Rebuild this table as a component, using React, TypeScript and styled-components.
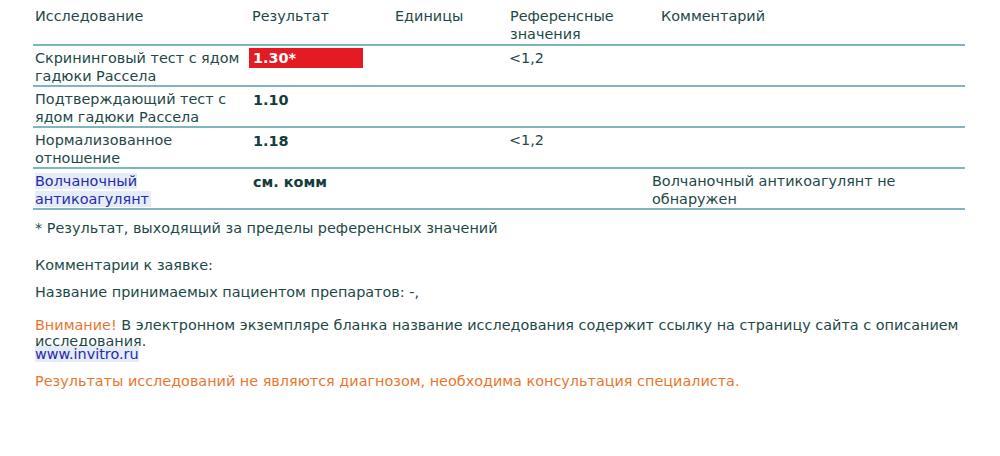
import styled, { createGlobalStyle } from "styled-components";

const GlobalStyle = createGlobalStyle`
  html, body {
    margin: 0;
    padding: 0;
    background: #ffffff;
  }
  body {
    font-family: "DejaVu Sans", Verdana, sans-serif;
    font-size: 14.4px;
    color: #1e4848;
  }
`;

const StPage = styled.div`
  width: 1000px;
  height: 456px;
  padding: 7px 0 0 33px;
  box-sizing: border-box;
  overflow: hidden;
`;

const StTable = styled.div`
  width: 932px;
  display: grid;
  grid-template-columns: 216px 144px 115px 142px 1fr;
`;

const StHeadCell = styled.div<{ $indent?: number }>`
  padding: 0 0 0 ${({ $indent }) => $indent ?? 2}px;
  height: 37px;
  line-height: 18px;
  border-bottom: 2px solid #7db6bc;
`;

const StCell = styled.div<{ $indent?: number }>`
  padding: 3px 2px 0 ${({ $indent }) => $indent ?? 2}px;
  height: 36px;
  line-height: 18px;
  border-bottom: 2px solid #7db6bc;
`;

const StValue = styled.span<{ $flag?: boolean }>`
  display: inline-block;
  font-weight: bold;
  color: ${({ $flag }) => ($flag ? "#ffffff" : "#143c3c")};
  background: ${({ $flag }) => ($flag ? "#e41b23" : "transparent")};
  width: ${({ $flag }) => ($flag ? "106px" : "auto")};
  padding: ${({ $flag }) => ($flag ? "1px 4px" : "1px 0 0 2px")};
  margin: ${({ $flag }) => ($flag ? "-1px 0 0 -2px" : "0")};
  line-height: 18px;
`;

const StLinkName = styled.span`
  color: #2a2aa8;
  background: #e4ecf8;
  padding-right: 2px;
`;

const StNotes = styled.div`
  padding-left: 2px;
  width: 945px;
`;

const StNote = styled.div<{ $top: number }>`
  margin: ${({ $top }) => $top}px 0 0;
  line-height: 16px;
`;

const StSiteLine = styled.div`
  margin-top: -3px;
  line-height: 16px;
`;

const StOrange = styled.span`
  color: #e8762e;
`;

const StSite = styled.span`
  color: #2a2aa8;
  background: #e4ecf8;
`;

type Row = {
  name: string;
  value: string;
  flag?: boolean;
  ref?: string;
  comment?: string;
  link?: boolean;
};

const rows: Row[] = [
  { name: "Скрининговый тест с ядом гадюки Рассела", value: "1.30*", flag: true, ref: "<1,2" },
  { name: "Подтверждающий тест с ядом гадюки Рассела", value: "1.10" },
  { name: "Нормализованное отношение", value: "1.18", ref: "<1,2" },
  {
    name: "Волчаночный антикоагулянт",
    value: "см. комм",
    link: true,
    comment: "Волчаночный антикоагулянт не обнаружен",
  },
];

const App = () => {
  return (
    <>
      <GlobalStyle />
      <StPage>
        <StTable>
          <StHeadCell>Исследование</StHeadCell>
          <StHeadCell $indent={3}>Результат</StHeadCell>
          <StHeadCell>Единицы</StHeadCell>
          <StHeadCell>
            Референсные
            <br />
            значения
          </StHeadCell>
          <StHeadCell $indent={11}>Комментарий</StHeadCell>
          {rows.map((row, index) => [
            <StCell key={`n${index}`}>
              {row.link ? (
                <StLinkName>
                  Волчаночный
                  <br />
                  антикоагулянт
                </StLinkName>
              ) : (
                row.name
              )}
            </StCell>,
            <StCell key={`v${index}`} $indent={2}>
              <StValue $flag={row.flag}>{row.value}</StValue>
            </StCell>,
            <StCell key={`u${index}`} />,
            <StCell key={`r${index}`} $indent={1}>
              {row.ref}
            </StCell>,
            <StCell key={`c${index}`}>{row.comment}</StCell>,
          ])}
        </StTable>
        <StNotes>
          <StNote $top={10}>* Результат, выходящий за пределы референсных значений</StNote>
          <StNote $top={21}>Комментарии к заявке:</StNote>
          <StNote $top={11}>Название принимаемых пациентом препаратов: -,</StNote>
          <StNote $top={17}>
            <StOrange>Внимание!</StOrange> В электронном экземпляре бланка название
            исследования содержит ссылку на страницу сайта с описанием
            <br />
            исследования.
          </StNote>
          <StSiteLine>
            <StSite>www.invitro.ru</StSite>
          </StSiteLine>
          <StNote $top={11}>
            <StOrange>
              Результаты исследований не являются диагнозом, необходима консультация
              специалиста.
            </StOrange>
          </StNote>
        </StNotes>
      </StPage>
    </>
  );
};

export default App;
